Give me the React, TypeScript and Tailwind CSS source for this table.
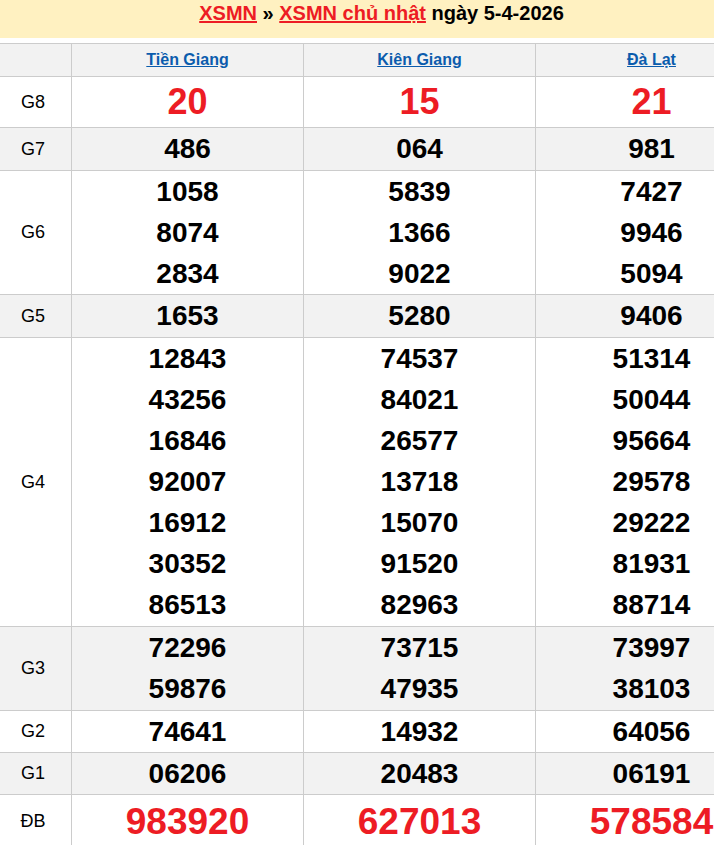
import React from "react";

type Row = {
  label: string;
  h: number;
  gray: boolean;
  big?: boolean;
  cols: string[][];
};

const rows: Row[] = [
  { label: "G8", h: 51, gray: false, big: true, cols: [["20"], ["15"], ["21"]] },
  { label: "G7", h: 43, gray: true, cols: [["486"], ["064"], ["981"]] },
  {
    label: "G6",
    h: 124,
    gray: false,
    cols: [
      ["1058", "8074", "2834"],
      ["5839", "1366", "9022"],
      ["7427", "9946", "5094"],
    ],
  },
  { label: "G5", h: 43, gray: true, cols: [["1653"], ["5280"], ["9406"]] },
  {
    label: "G4",
    h: 289,
    gray: false,
    cols: [
      ["12843", "43256", "16846", "92007", "16912", "30352", "86513"],
      ["74537", "84021", "26577", "13718", "15070", "91520", "82963"],
      ["51314", "50044", "95664", "29578", "29222", "81931", "88714"],
    ],
  },
  {
    label: "G3",
    h: 84,
    gray: true,
    cols: [
      ["72296", "59876"],
      ["73715", "47935"],
      ["73997", "38103"],
    ],
  },
  { label: "G2", h: 42, gray: false, cols: [["74641"], ["14932"], ["64056"]] },
  { label: "G1", h: 42, gray: true, cols: [["06206"], ["20483"], ["06191"]] },
];

const widths = ["w-[232px] border-r", "w-[232px] border-r", "w-[231px]"];

export default function App() {
  return (
    <div
      className="w-[714px] h-[845px] overflow-hidden bg-white text-black"
      style={{ fontFamily: '"Liberation Sans", Arial, sans-serif' }}
    >
      <div className="w-[767px]">
        <div className="h-[38px] bg-[#fff1c1] text-center text-[20px] font-bold leading-[26px] pr-[4px]">
          <a className="text-[#ed1c24] underline">XSMN</a> »{" "}
          <a className="text-[#ed1c24] underline">XSMN chủ nhật</a> ngày 5-4-2026
        </div>
        <div className="mt-[5px] border-t border-[#cccccc]">
          <div className="flex h-[33px] border-b border-[#cccccc] bg-[#f2f2f2]">
            <div className="w-[72px] border-r border-[#cccccc]" />
            {["Tiền Giang", "Kiên Giang", "Đà Lạt"].map((p, i) => (
              <div
                key={p}
                className={`${widths[i]} border-[#cccccc] flex items-center justify-center text-[16px] font-bold text-[#0b5cad]`}
              >
                <a className="underline">{p}</a>
              </div>
            ))}
          </div>
          {rows.map((r) => (
            <div
              key={r.label}
              className={`flex border-b border-[#cccccc] ${r.gray ? "bg-[#f2f2f2]" : "bg-white"}`}
              style={{ height: r.h }}
            >
              <div className="w-[72px] border-r border-[#cccccc] flex items-center justify-center pr-[5px] text-[18px]">
                {r.label}
              </div>
              {r.cols.map((c, i) => (
                <div
                  key={i}
                  className={`${widths[i]} border-[#cccccc] flex flex-col items-center font-bold`}
                >
                  {c.map((n, j) =>
                    r.big ? (
                      <div key={j} className="text-[36px] leading-[50px] text-[#ed1c24]">
                        {n}
                      </div>
                    ) : (
                      <div key={j} className="text-[28px] leading-[41px]">
                        {n}
                      </div>
                    )
                  )}
                </div>
              ))}
            </div>
          ))}
          <div className="flex h-[60px] bg-white">
            <div className="w-[72px] border-r border-[#cccccc] flex items-start justify-center pr-[5px] text-[18px] leading-[53px]">
              ĐB
            </div>
            {["983920", "627013", "578584"].map((n, i) => (
              <div
                key={n}
                className={`${widths[i]} border-[#cccccc] flex justify-center text-[37px] leading-[53px] font-bold text-[#ed1c24]`}
              >
                {n}
              </div>
            ))}
          </div>
        </div>
      </div>
    </div>
  );
}
